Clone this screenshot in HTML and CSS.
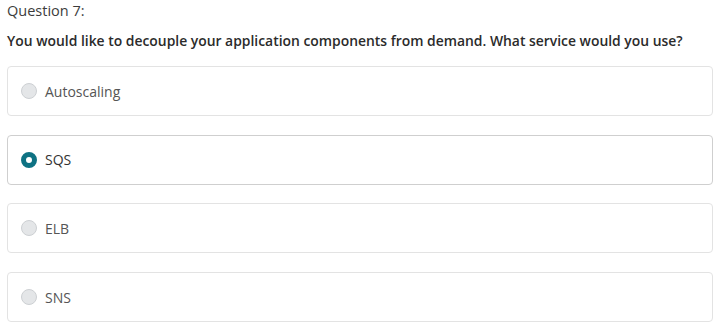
FILE: index.html
```html
<!DOCTYPE html>
<html>
<head>
	<meta charset="utf-8">
	<title>Question 7</title>
	<link rel="stylesheet" href="styles.css">
</head>
<body>
	<div id="quiz">
		<div class="numero">Question 7:</div>
		<div class="pergunta">You would like to decouple your application components from demand. What service would you use?</div>
		<ul class="opcoes">
			<li class="opcao"><span class="radio"></span>Autoscaling</li>
			<li class="opcao selecionado"><span class="radio"></span>SQS</li>
			<li class="opcao"><span class="radio"></span>ELB</li>
			<li class="opcao"><span class="radio"></span>SNS</li>
		</ul>
	</div>
</body>
</html>
```

FILE: styles.css
```css
* {
	box-sizing: border-box;
}

body {
	margin: 0;
	font-family: "Open Sans", Arial, sans-serif;
	background: #fff;
}

#quiz {
	padding: 1px 7px 0 7px;
}

.numero {
	font-size: 14.5px;
	line-height: 20px;
	color: #3c3c3c;
}

.pergunta {
	margin-top: 10px;
	font-size: 13.9px;
	font-weight: 600;
	line-height: 20px;
	color: #2b2b2b;
}

.opcoes {
	list-style: none;
	margin: 15px 0 0 0;
	padding: 0;
	display: flex;
	flex-direction: column;
	gap: 18.7px;
	width: 706px;
}

.opcao {
	display: flex;
	align-items: center;
	height: 50px;
	padding: 0 13px;
	border: 1px solid #e3e3e3;
	border-radius: 4px;
	font-size: 14px;
	color: #555;
}

.opcao.selecionado {
	border-color: #cfcfcf;
	color: #333;
}

.radio {
	width: 16px;
	height: 16px;
	border-radius: 50%;
	background: #e4e6e8;
	border: 1px solid #cdd0d3;
	margin-right: 8px;
}

.selecionado .radio {
	background: #fff;
	border: 5px solid #0e7283;
}
```
